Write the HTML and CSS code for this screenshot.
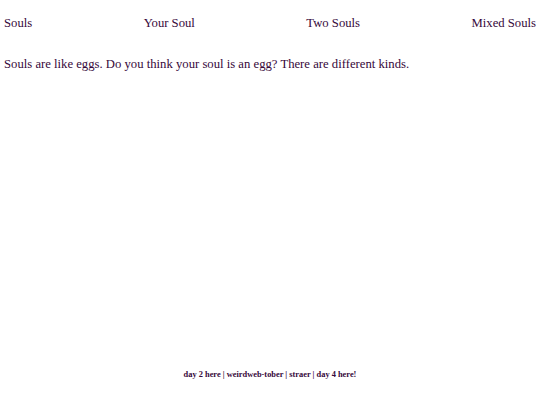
FILE: index.html
```html
<!DOCTYPE html>
<html>
<head>
<meta charset="utf-8">
<link rel="stylesheet" href="styles.css">
</head>
<body>
<div class="page">
  <nav class="nav">
    <span class="nav-item">Souls</span>
    <span class="nav-item">Your Soul</span>
    <span class="nav-item">Two Souls</span>
    <span class="nav-item">Mixed Souls</span>
  </nav>
  <p class="intro">Souls are like eggs. Do you think your soul is an egg? There are different kinds.</p>
  <footer class="footer">day 2 here | weirdweb-tober | straer | day 4 here!</footer>
</div>
</body>
</html>
```
FILE: styles.css
```css
html, body {
  margin: 0;
  padding: 0;
  background: #ffffff;
}
.page {
  box-sizing: border-box;
  height: 405px;
  padding: 16px 4px 0 4px;
  display: flex;
  flex-direction: column;
  font-family: "Liberation Serif", "Times New Roman", serif;
  color: #36083a;
  font-size: 12.7px;
}
.nav {
  display: flex;
  justify-content: space-between;
}
.intro {
  margin: 26px 0 0 0;
}
.footer {
  margin-top: auto;
  margin-bottom: 26px;
  text-align: center;
  font-size: 8.4px;
  font-weight: bold;
}
```
